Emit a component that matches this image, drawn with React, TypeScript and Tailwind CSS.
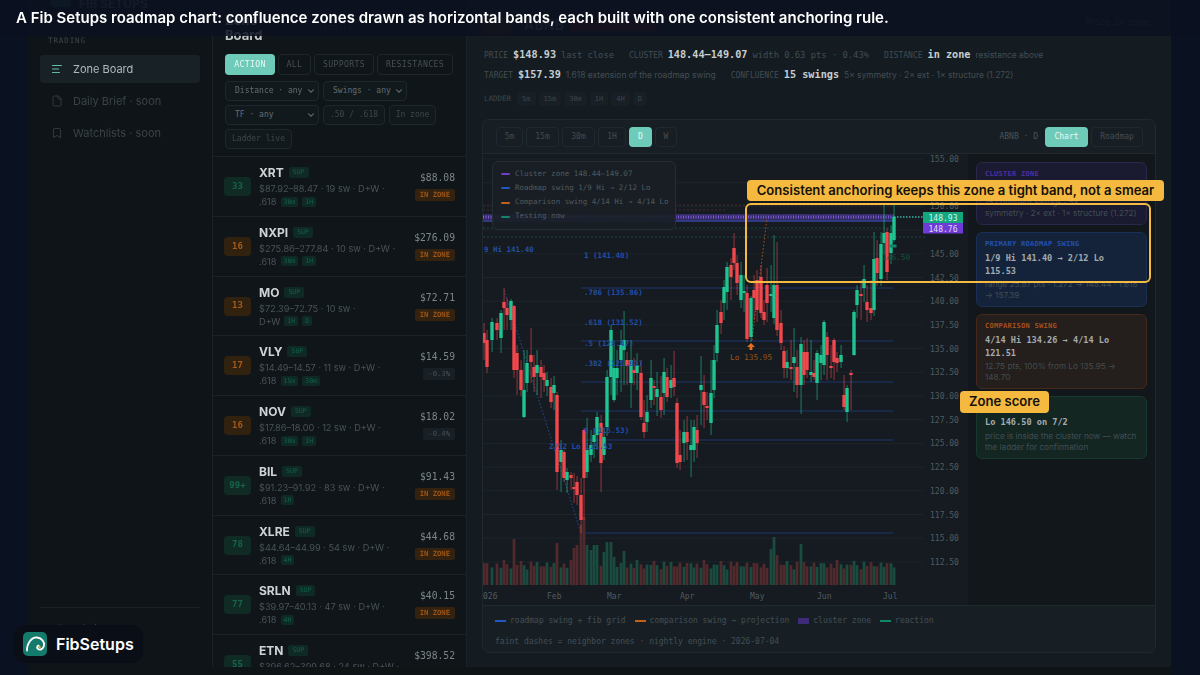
import { AlignLeft, Bookmark, ChevronDown, File } from "lucide-react";

const mono = "font-['DejaVu_Sans_Mono',monospace]";

type Row = {
  rank: string;
  hot: boolean;
  ticker: string;
  range: string;
  rest: string;
  tags: string[];
  price: string;
  chip: string;
};

const rows: Row[] = [
  { rank: "33", hot: false, ticker: "XRT", range: "$87.92–88.47 · 19 sw · D+W ·", rest: ".618", tags: ["30m", "1H"], price: "$88.08", chip: "IN ZONE" },
  { rank: "16", hot: true, ticker: "NXPI", range: "$275.86–277.84 · 10 sw · D+W ·", rest: ".618", tags: ["30m", "1H"], price: "$276.09", chip: "IN ZONE" },
  { rank: "13", hot: true, ticker: "MO", range: "$72.39–72.75 · 10 sw ·", rest: "D+W", tags: ["1H", "D"], price: "$72.71", chip: "IN ZONE" },
  { rank: "17", hot: true, ticker: "VLY", range: "$14.49–14.57 · 11 sw · D+W ·", rest: ".618", tags: ["15m", "30m"], price: "$14.59", chip: "-0.3%" },
  { rank: "16", hot: true, ticker: "NOV", range: "$17.86–18.00 · 12 sw · D+W ·", rest: ".618", tags: ["30m", "1H"], price: "$18.02", chip: "-0.4%" },
  { rank: "99+", hot: false, ticker: "BIL", range: "$91.23–91.92 · 83 sw · D+W ·", rest: ".618", tags: ["1H"], price: "$91.43", chip: "IN ZONE" },
  { rank: "78", hot: false, ticker: "XLRE", range: "$44.64–44.99 · 54 sw · D+W ·", rest: ".618", tags: ["4H"], price: "$44.68", chip: "IN ZONE" },
  { rank: "77", hot: false, ticker: "SRLN", range: "$39.97–40.13 · 47 sw · D+W ·", rest: ".618", tags: ["4H"], price: "$40.15", chip: "IN ZONE" },
  { rank: "55", hot: false, ticker: "ETN", range: "$396.62–399.68 · 24 sw · D+W ·", rest: ".618", tags: ["4H"], price: "$398.52", chip: "IN ZONE" },
];

// x, body top, body bottom, wick top, wick bottom, 1 = green (page pixels)
const candles: number[][] = [
  [484, 333, 343, 323, 360, 0], [487, 340, 367, 330, 373, 0], [492, 322, 340, 318, 352, 1], [497, 323, 330, 318, 340, 0],
  [501, 313, 338, 310, 353, 1], [504, 302, 308, 288, 330, 0], [507, 308, 315, 298, 330, 0], [511, 301, 320, 299, 330, 1],
  [514, 306, 370, 305, 378, 0], [517, 353, 370, 345, 395, 0], [521, 370, 390, 360, 396, 0], [524, 390, 417, 350, 418, 1],
  [527, 363, 383, 350, 392, 1], [531, 355, 362, 328, 383, 0], [534, 367, 377, 355, 392, 0], [537, 365, 373, 350, 395, 1],
  [541, 367, 377, 360, 398, 0], [544, 373, 380, 365, 392, 0], [547, 380, 386, 372, 396, 1], [551, 387, 402, 378, 408, 0],
  [554, 385, 393, 376, 410, 1], [557, 395, 472, 392, 490, 0], [561, 450, 462, 440, 492, 1], [564, 452, 478, 450, 482, 0],
  [567, 472, 480, 468, 493, 1], [571, 475, 478, 472, 490, 0], [574, 487, 489, 473, 503, 0], [577, 482, 495, 476, 505, 0],
  [581, 495, 520, 478, 533, 0], [584, 430, 478, 428, 520, 0], [587, 450, 472, 418, 478, 1], [591, 445, 455, 430, 462, 1],
  [594, 435, 442, 428, 458, 1], [597, 417, 435, 412, 450, 1], [601, 423, 463, 415, 492, 0], [604, 437, 455, 428, 460, 1],
  [607, 377, 427, 370, 436, 1], [611, 330, 377, 325, 395, 1], [614, 368, 400, 345, 402, 1], [617, 368, 378, 350, 395, 1],
  [621, 345, 360, 330, 392, 1], [624, 340, 350, 311, 385, 1], [627, 360, 366, 352, 385, 0], [631, 360, 383, 340, 408, 1],
  [634, 370, 373, 358, 385, 0], [637, 365, 373, 353, 390, 1], [641, 373, 417, 360, 420, 0], [644, 423, 432, 400, 438, 0],
  [647, 412, 422, 395, 432, 1], [651, 378, 400, 360, 408, 1], [654, 386, 388, 380, 405, 0], [657, 389, 397, 372, 416, 1],
  [661, 397, 410, 376, 418, 0], [664, 372, 393, 358, 415, 1], [667, 377, 397, 368, 402, 0], [671, 380, 388, 365, 398, 1],
  [674, 378, 387, 351, 396, 0], [677, 403, 463, 398, 468, 0], [680, 455, 462, 430, 470, 0], [684, 432, 443, 420, 462, 1],
  [687, 432, 442, 416, 460, 0], [691, 445, 450, 420, 477, 1], [694, 427, 450, 420, 462, 1], [697, 430, 443, 415, 458, 0],
  [701, 385, 390, 356, 425, 1], [704, 392, 405, 375, 428, 0], [707, 406, 408, 392, 420, 0], [711, 393, 423, 360, 435, 1],
  [714, 360, 390, 345, 398, 1], [717, 325, 353, 310, 362, 1], [721, 312, 323, 300, 334, 0], [724, 287, 303, 280, 320, 1],
  [727, 267, 292, 262, 310, 1], [731, 265, 277, 258, 300, 0], [734, 248, 263, 233, 270, 0], [737, 263, 283, 255, 295, 0],
  [741, 275, 300, 262, 308, 1], [744, 291, 293, 275, 312, 1], [747, 293, 339, 285, 342, 0], [751, 298, 337, 296, 342, 1],
  [754, 290, 298, 275, 320, 0], [757, 280, 310, 270, 322, 0], [761, 277, 313, 265, 318, 0], [764, 312, 320, 300, 325, 0],
  [767, 285, 303, 268, 322, 0], [771, 294, 296, 265, 312, 1], [774, 285, 318, 235, 324, 1], [777, 285, 330, 242, 336, 0],
  [781, 323, 343, 310, 350, 0], [784, 351, 368, 346, 378, 0], [787, 362, 368, 350, 378, 1], [791, 367, 369, 340, 380, 0],
  [794, 357, 363, 328, 392, 1], [797, 367, 385, 350, 398, 0], [801, 344, 385, 337, 414, 1], [804, 352, 375, 340, 385, 0],
  [807, 352, 370, 338, 378, 0], [811, 372, 375, 340, 382, 1], [814, 373, 377, 360, 380, 0], [817, 353, 383, 350, 400, 1],
  [821, 355, 363, 345, 380, 1], [824, 322, 365, 320, 375, 1], [827, 337, 355, 332, 380, 0], [831, 366, 368, 345, 378, 0],
  [834, 340, 362, 338, 380, 0], [837, 358, 363, 352, 372, 0], [841, 355, 362, 345, 368, 1], [844, 395, 407, 375, 410, 0],
  [847, 388, 412, 385, 422, 1], [851, 373, 375, 370, 410, 0], [854, 312, 355, 310, 356, 1], [857, 290, 305, 285, 318, 1],
  [861, 294, 296, 280, 320, 0], [864, 279, 288, 265, 302, 1], [867, 302, 310, 285, 322, 0], [871, 308, 313, 280, 320, 0],
  [874, 259, 310, 232, 316, 1], [877, 258, 273, 240, 286, 0], [881, 244, 279, 232, 286, 1], [884, 233, 243, 205, 254, 1],
  [887, 232, 272, 228, 280, 0], [891, 233, 253, 225, 264, 1], [894, 217, 240, 205, 242, 1],
];

// bar tops for the spikes, everything else gets a small repeating height
const spikes: Record<number, number> = { 514: 539, 557: 543, 574: 548, 577: 545, 581: 525, 584: 517, 587: 545, 591: 550, 594: 545, 597: 545, 604: 552, 607: 542, 611: 542, 614: 557, 624: 551, 774: 537, 771: 549, 777: 555, 801: 544 };

function volTop(x: number, i: number) {
  return spikes[x] ?? 563 + ((i * 7) % 5) * 1.6 - ((i * 3) % 4);
}

const priceTicks = [155, 152.5, 150, 147.5, 145, 142.5, 140, 137.5, 135, 132.5, 130, 127.5, 125, 122.5, 120, 117.5, 115, 112.5];
const tickY = (p: number) => 159 + (155 - p) * 9.48;
const axisTicks = priceTicks.filter((p) => p !== 152.5 && p !== 147.5);

const fibLines = [288, 341, 382, 411, 440, 533];
const fibLabels: [number, number, string][] = [
  [584, 258, "1 (141.40)"], [584, 295, ".786 (135.86)"], [584, 325, ".618 (131.52)"], [584, 346, ".5 (128.47)"],
  [584, 366, ".382 (125.81)"], [584, 433, "0 (115.53)"], [549, 449, "2/12 Lo 115.53"], [484, 252, "9 Hi 141.40"],
];
const months: [number, string][] = [[483, "026"], [547, "Feb"], [607, "Mar"], [680, "Apr"], [750, "May"], [817, "Jun"], [883, "Jul"]];

function Chart() {
  return (
    <svg viewBox="483 154 485 451" width={485} height={451} className="block" fontFamily="DejaVu Sans Mono, monospace">
      {priceTicks.map((p) => (
        <line key={p} x1={483} x2={923} y1={tickY(p)} y2={tickY(p)} stroke="#1d252a" strokeWidth={1} />
      ))}
      <rect x={483} y={214} width={411} height={8} fill="#342a66" />
      <line x1={483} x2={894} y1={205} y2={205} stroke="#4a2a2e" strokeDasharray="2 2" />
      <line x1={483} x2={725} y1={210} y2={210} stroke="#4a2a2e" strokeDasharray="2 2" />
      <line x1={483} x2={894} y1={228} y2={228} stroke="#1f4a3e" strokeDasharray="2 2" />
      <line x1={483} x2={925} y1={237} y2={237} stroke="#1f4a3e" strokeDasharray="2 2" />
      <line x1={483} x2={894} y1={217} y2={217} stroke="#7c5cd6" strokeWidth={3} strokeDasharray="1 1.5" />
      <line x1={483} x2={894} y1={221} y2={221} stroke="#2d4aa0" strokeWidth={1} />
      <line x1={894} x2={925} y1={217} y2={217} stroke="#2e8d86" strokeWidth={2} strokeDasharray="1.5 1.5" />
      {fibLines.map((y) => (
        <line key={y} x1={581} x2={893} y1={y} y2={y} stroke="#20376e" strokeWidth={1.2} />
      ))}
      <line x1={504} y1={290} x2={581} y2={533} stroke="#2a4a9a" strokeWidth={1} strokeDasharray="1.5 2" />
      <line x1={752} y1={340} x2={767} y2={218} stroke="#a8561a" strokeWidth={1} strokeDasharray="1.5 2" />
      {candles.map(([x, , , , , up], i) => (
        <rect key={"v" + x} x={x - 1.4} y={volTop(x, i)} width={2.8} height={585 - volTop(x, i)} fill={up ? "#1b4b3f" : "#502a2c"} />
      ))}
      {candles.map(([x, top, bottom, hi, lo, up]) => (
        <g key={x} fill={up ? "#1fc491" : "#f0484d"}>
          <rect x={x - 0.4} y={hi} width={0.9} height={lo - hi} opacity={0.65} />
          <rect x={x - 1.7} y={top} width={3.4} height={bottom - top} />
        </g>
      ))}
      {fibLabels.map(([x, y, label]) => (
        <text key={label} x={x} y={y} fontSize={7.5} fontWeight={700} fill="#234fa8">{label}</text>
      ))}
      <path d="M751 343 l-4 4 h2.6 v3 h2.8 v-3 h2.6 z" fill="#e8701c" />
      <text x={730} y={360} fontSize={7.8} fill="#9a5219">Lo 135.95</text>
      <path d="M889 246 l4 -3.5 v2 h3.5 v3 h-3.5 v2 z" fill="#12866a" />
      <text x={882} y={260} fontSize={7.8} fill="#17513f">146.50</text>
      {axisTicks.map((p) => (
        <text key={p} x={930} y={tickY(p) + 3} fontSize={8} fill="#505b61">{p.toFixed(2)}</text>
      ))}
      <rect x={923} y={212} width={40} height={11} fill="#14a77e" />
      <text x={943} y={220.5} fontSize={8} fill="#d8f3ea" textAnchor="middle">148.93</text>
      <rect x={923} y={223} width={40} height={10.5} fill="#6d3bd6" />
      <text x={943} y={231.5} fontSize={8} fill="#e4dcf8" textAnchor="middle">148.76</text>
      {months.map(([x, m]) => (
        <text key={m} x={x} y={599} fontSize={8} fill="#505b61">{m}</text>
      ))}
    </svg>
  );
}

function NavItem({ icon, label, active }: { icon: React.ReactNode; label: string; active?: boolean }) {
  return (
    <div className={`flex h-[28px] items-center gap-[10px] rounded-[3px] px-[11px] text-[11px] ${active ? "bg-[#182126] text-[#b0babb]" : "text-[#3a4347]"}`}>
      {icon}
      {label}
    </div>
  );
}

function Pill({ children, w }: { children: React.ReactNode; w: string }) {
  return (
    <div className={`${w} ${mono} flex h-[20px] items-center justify-center rounded-[4px] border border-[#1e272c] bg-[#12191d] text-[8px] text-[#3d474c]`}>
      {children}
    </div>
  );
}

function SelectBox({ label, w }: { label: string; w: string }) {
  return (
    <div className={`${w} ${mono} flex h-[20px] items-center justify-between rounded-[4px] border border-[#1e272c] bg-[#12191d] pl-[9px] pr-[2px] text-[8px] text-[#626c70]`}>
      {label}
      <ChevronDown size={10} strokeWidth={2.5} className="text-[#727c80]" />
    </div>
  );
}

function BoardRow({ row }: { row: Row }) {
  const inZone = row.chip === "IN ZONE";
  return (
    <div className="flex h-[59.75px] shrink-0 items-center border-b border-[#1a2227] pl-[11px] pr-[11px] pt-[0.5px]">
      <div className={`${mono} flex h-[19px] w-[27px] shrink-0 items-center justify-center rounded-[4px] text-[9px] font-bold ${row.hot ? "bg-[#30220f] text-[#a5591a]" : "bg-[#0f2b24] text-[#17634c]"}`}>
        {row.rank}
      </div>
      <div className="ml-[8px] min-w-0 flex-1">
        <div className="flex items-center gap-[5px]">
          <span className="text-[12px] font-bold leading-[15px] text-[#cfd3d5]">{row.ticker}</span>
          <span className={`${mono} rounded-[2px] bg-[#0f2a24] px-[4px] py-[1px] text-[6.5px] leading-[9px] text-[#14604a]`}>SUP</span>
        </div>
        <div className="mt-[2px] whitespace-nowrap text-[9.2px] leading-[13px] text-[#495357]">{row.range}</div>
        <div className="flex items-center gap-[3px] text-[9.2px] leading-[13px] text-[#495357]">
          {row.rest}
          {row.tags.map((t) => (
            <span key={t} className={`${mono} ml-[1px] rounded-[2px] bg-[#0f2a24] px-[3px] text-[6.5px] leading-[10px] text-[#14604a]`}>{t}</span>
          ))}
        </div>
      </div>
      <div className={`${mono} flex shrink-0 flex-col items-end gap-[5px]`}>
        <span className="text-[9.7px] leading-[12px] text-[#7c8689]">{row.price}</span>
        <span className={`rounded-[2px] px-[5px] text-[7.2px] leading-[12px] ${inZone ? "bg-[#33220f] font-bold text-[#9c5416]" : "bg-[#182026] text-[#465055]"}`}>{row.chip}</span>
      </div>
    </div>
  );
}

function Stat({ label, value, note, noteSans }: { label: string; value: string; note: string; noteSans?: boolean }) {
  return (
    <div className="flex items-baseline gap-[5px] whitespace-nowrap">
      <span className={`${mono} text-[8px] text-[#424c51]`}>{label}</span>
      <span className={`${mono} text-[10.2px] font-bold text-[#c8cdcf]`}>{value}</span>
      <span className={noteSans ? "text-[8.45px] text-[#434d52]" : `${mono} text-[8.8px] text-[#434d52]`}>{note}</span>
    </div>
  );
}

function SideCard({ title, tone, value, note }: { title: string; tone: string; value: string[]; note: string[] }) {
  return (
    <div className={`${tone} h-[63px] rounded-[6px] border px-[8px] pt-[6px] has-[.tall]:h-[75px]`}>
      <div className={`${mono} text-[7px] font-bold leading-[10px] tracking-[0.04em]`}>{title}</div>
      <div className={`${mono} ${value.length > 1 ? "tall" : ""} mt-[3px] text-[8.6px] font-semibold leading-[12.5px] text-[#a3aaae]`}>
        {value.map((v) => (<div key={v}>{v}</div>))}
      </div>
      <div className="mt-[2px] text-[8.2px] leading-[11.3px] text-[#434d52]">
        {note.map((n) => (<div key={n} className="whitespace-nowrap">{n}</div>))}
      </div>
    </div>
  );
}

function LegendDash({ color, text }: { color: string; text: string }) {
  return (
    <div className="flex items-center gap-[5px]">
      <span className={`${color} h-[2px] w-[9px] rounded-full`} />
      {text}
    </div>
  );
}

export default function App() {
  return (
    <div className="relative h-[675px] w-[1200px] overflow-hidden bg-[#0a1120] font-['Inter',sans-serif]">
      <div className="ml-[28px] flex h-full w-[1143px] bg-[#0f1517] blur-[0.4px]">
        {/* sidebar */}
        <div className="flex h-full w-[184px] shrink-0 flex-col bg-[#0e1418] px-[12px]">
          <div className="flex h-[36px] items-start gap-[8px] pl-[11px]">
            <div className="h-[7px] w-[20px] rounded-b-[4px] bg-[#1a4a45]" />
            <span className="text-[12px] leading-[7px] font-bold text-[#4a5459]">FIB SETUPS</span>
          </div>
          <div className={`${mono} pl-[8px] text-[7.5px] leading-[10px] tracking-[0.12em] text-[#3e484d]`}>TRADING</div>
          <div className="mt-[9px] flex flex-col gap-[4px]">
            <NavItem active label="Zone Board" icon={<AlignLeft size={12} strokeWidth={2} className="text-[#5fbcaa]" />} />
            <NavItem label="Daily Brief · soon" icon={<File size={12} strokeWidth={1.6} />} />
            <NavItem label="Watchlists · soon" icon={<Bookmark size={12} strokeWidth={1.6} />} />
          </div>
          <div className="mt-auto border-t border-[#1a2126] pb-[29px] pl-[10px] pt-[14px]">
            <div className="flex items-center gap-[8px]">
              <div className="flex h-[20px] w-[20px] items-center justify-center rounded-full bg-[#182126] text-[9px] text-[#4c565b]">S</div>
              <div className="text-[9.5px] leading-[12px] text-[#3e484c]">
                <div>shot-qa</div>
                <div>free preview</div>
              </div>
            </div>
          </div>
        </div>

        {/* board */}
        <div className="flex h-[667px] w-[255px] shrink-0 flex-col overflow-hidden border-x border-[#1a2227] bg-[#0f1519]">
          <div className="relative h-[157px] shrink-0 border-b border-[#1a2227] px-[12px]">
            <div className="flex h-[54px] items-end gap-[8px] pb-[11px]">
              <div className="text-[13px] font-bold leading-[15px] text-[#c2c7c9]">Zone<br />Board</div>
              <div className={`${mono} mb-[9px] ml-[48px] text-[8px] text-[#39434a]`}>symbols</div>
            </div>
            <div className={`${mono} flex gap-[3px] text-[8.2px] tracking-[0.04em]`}>
              <div className="flex h-[21px] w-[50px] items-center justify-center rounded-[4px] bg-[#6fcbb9] text-[#e9f8f4]">ACTION</div>
              <div className="flex h-[21px] w-[33px] items-center justify-center rounded-[4px] border border-[#1e272c] text-[#465156]">ALL</div>
              <div className="flex h-[21px] w-[60px] items-center justify-center rounded-[4px] border border-[#1e272c] text-[#465156]">SUPPORTS</div>
              <div className="flex h-[21px] w-[76px] items-center justify-center rounded-[4px] border border-[#1e272c] text-[#465156]">RESISTANCES</div>
            </div>
            <div className="mt-[6px] flex gap-[4px]">
              <SelectBox label="Distance · any" w="w-[94px]" />
              <SelectBox label="Swings · any" w="w-[84px]" />
            </div>
            <div className="mt-[4px] flex gap-[4px]">
              <SelectBox label="TF · any" w="w-[94px]" />
              <Pill w="w-[62px]">.50 / .618</Pill>
              <Pill w="w-[47px]">In zone</Pill>
            </div>
            <div className="mt-[4px]">
              <Pill w="w-[67px]">Ladder live</Pill>
            </div>
          </div>
          {rows.map((r) => (
            <BoardRow key={r.ticker} row={r} />
          ))}
        </div>

        {/* main */}
        <div className="flex h-[667px] w-[704px] shrink-0 flex-col bg-[#141c21] pl-[15px] pr-[15px]">
          <div className="flex h-[45px] shrink-0 items-start">
            <div className="mt-[17px] h-[18px] w-[30px] rounded-[5px] bg-[#3a2412]" />
            <span className="ml-[12px] mt-[18px] text-[14px] font-bold leading-[14px] text-[#586268]">ABNB</span>
            <span className="ml-[6px] mt-[20px] h-[11px] w-[87px] rounded-[3px] bg-[#5a1a1c]" />
            <span className={`${mono} ml-auto mr-[8px] mt-[17px] text-[8px] text-[#4d585e]`}>Price in zone</span>
          </div>
          <div className="flex h-[20px] shrink-0 items-center gap-[15px] pl-[2px]">
            <Stat label="PRICE" value="$148.93" note="last close" />
            <Stat label="CLUSTER" value="148.44–149.07" note="width 0.63 pts · 0.43%" />
            <Stat label="DISTANCE" value="in zone" note="resistance above" noteSans />
          </div>
          <div className="flex h-[20px] shrink-0 items-center gap-[15px] pl-[2px]">
            <Stat label="TARGET" value="$157.39" note="1.618 extension of the roadmap swing" noteSans />
            <Stat label="CONFLUENCE" value="15 swings" note="5× symmetry · 2× ext · 1× structure (1.272)" noteSans />
          </div>
          <div className={`${mono} mt-[6.5px] flex h-[15px] shrink-0 items-center gap-[3px] pl-[2px] text-[7px] text-[#3d474c]`}>
            <span className="mr-[3px] text-[7.5px]">LADDER</span>
            {["5m", "15m", "30m", "1H", "4H", "D"].map((t) => (
              <span key={t} className="flex h-[14px] items-center rounded-[3px] bg-[#181f25] px-[5px]">{t}</span>
            ))}
          </div>

          <div className="mt-[12.5px] flex h-[534px] shrink-0 flex-col overflow-hidden rounded-[7px] border border-[#20292e] bg-[#171f25]">
            <div className="flex h-[34px] shrink-0 items-center border-b border-[#20292e] pl-[13px] pr-[12px]">
              <div className={`${mono} flex gap-[3px] text-[8px] text-[#424c51]`}>
                {[["5m", "w-[27px]"], ["15m", "w-[33px]"], ["30m", "w-[33px]"], ["1H", "w-[28px]"]].map(([t, w]) => (
                  <span key={t} className={`${w} flex h-[20px] items-center justify-center rounded-[4px] border border-[#20292e]`}>{t}</span>
                ))}
                <span className="flex h-[20px] w-[23px] items-center justify-center rounded-[4px] bg-[#6fcbb9] text-[#e9f8f4]">D</span>
                <span className="flex h-[20px] w-[22px] items-center justify-center rounded-[4px] border border-[#20292e]">W</span>
              </div>
              <div className={`${mono} ml-auto flex items-center gap-[3px] text-[8px] text-[#424c51]`}>
                <span className="mr-[4px] text-[#4a5459]">ABNB · D</span>
                <span className="flex h-[20px] w-[43px] items-center justify-center rounded-[4px] bg-[#6fcbb9] text-[#e9f8f4]">Chart</span>
                <span className="flex h-[20px] w-[52px] items-center justify-center rounded-[4px] border border-[#20292e]">Roadmap</span>
              </div>
            </div>
            <div className="flex h-[451px] shrink-0">
              <div className="relative w-[485px] shrink-0 bg-[#151b20]">
                <Chart />
                <div className={`${mono} absolute left-[9px] top-[7px] flex h-[69px] w-[184px] flex-col justify-center gap-[3.6px] rounded-[6px] border border-[#252e33] bg-[#181f25]/90 pl-[8px] text-[7.5px] leading-[10.5px] text-[#4f5a60]`}>
                  <LegendDash color="bg-[#6d3fc4]" text="Cluster zone 148.44–149.07" />
                  <LegendDash color="bg-[#2456c0]" text="Roadmap swing 1/9 Hi → 2/12 Lo" />
                  <LegendDash color="bg-[#c2601c]" text="Comparison swing 4/14 Hi → 4/14 Lo" />
                  <LegendDash color="bg-[#12866a]" text="Testing now" />
                </div>
              </div>
              <div className="flex w-[187px] shrink-0 flex-col gap-[7px] bg-[#11171b] p-[8px]">
                <SideCard title="CLUSTER ZONE" tone="border-[#2a2748] bg-[#1a1a30] text-[#4c2fa0]" value={["148.44–149.07"]} note={["15 confluent swings · 5×", "symmetry · 2× ext · 1× structure (1.272)"]} />
                <SideCard title="PRIMARY ROADMAP SWING" tone="border-[#1a2f55] bg-[#14233a] text-[#2450b0]" value={["1/9 Hi 141.40 → 2/12 Lo", "115.53"]} note={["range 25.87 pts · 1.272 → 148.44 · 1.618", "→ 157.39"]} />
                <SideCard title="COMPARISON SWING" tone="border-[#46291a] bg-[#241e1c] text-[#a4501c]" value={["4/14 Hi 134.26 → 4/14 Lo", "121.51"]} note={["12.75 pts, 100% from Lo 135.95 →", "148.70"]} />
                <SideCard title="REACTION" tone="border-[#17392f] bg-[#132622] text-[#17634c]" value={["Lo 146.50 on 7/2"]} note={["price is inside the cluster now — watch", "the ladder for confirmation"]} />
              </div>
            </div>
            <div className={`${mono} flex-1 border-t border-[#20292e] pl-[12px] pt-[9px] text-[8px] text-[#434e53]`}>
              <div className="flex h-[12px] items-center gap-[9px]">
                <div className="flex items-center gap-[4px]"><span className="h-[2px] w-[11px] bg-[#2456c0]" />roadmap swing + fib grid</div>
                <div className="flex items-center gap-[4px]"><span className="h-[2px] w-[11px] bg-[#c2601c]" />comparison swing → projection</div>
                <div className="flex items-center gap-[4px]"><span className="h-[6px] w-[11px] bg-[#3d2a78]" />cluster zone</div>
                <div className="flex items-center gap-[4px]"><span className="h-[2px] w-[11px] bg-[#12866a]" />reaction</div>
              </div>
              <div className="mt-[9px]">faint dashes = neighbor zones · nightly engine · 2026-07-04</div>
            </div>
          </div>
        </div>
      </div>

      {/* overlays */}
      <div className="absolute left-0 top-0 flex h-[36px] w-full items-center bg-[#0a1120]/85 pl-[16px] text-[15px] font-semibold text-white">
        A Fib Setups roadmap chart: confluence zones drawn as horizontal bands, each built with one consistent anchoring rule.
      </div>
      <div className="absolute left-[747px] top-[180px] flex h-[21px] w-[417px] items-center justify-center rounded-[4px] bg-[#f5b93f] text-[13.1px] font-semibold text-[#14110a]">
        Consistent anchoring keeps this zone a tight band, not a smear
      </div>
      <div className="absolute left-[745px] top-[203px] h-[80px] w-[406px] rounded-[6px] border-2 border-[#f4bb42]" />
      <div className="absolute left-[960px] top-[391px] flex h-[22px] w-[89px] items-center justify-center rounded-[4px] bg-[#f5b93f] text-[13.1px] font-semibold text-[#14110a]">
        Zone score
      </div>
      <div className="absolute left-[14px] top-[625px] flex h-[38px] w-[129px] items-center gap-[9px] rounded-[10px] bg-[#0a0f17] pl-[9px]">
        <svg width={24} height={24} viewBox="0 0 24 24">
          <rect width={24} height={24} rx={5} fill="#147a6c" />
          <path d="M4 18.5C4 10.5 9 5 14 5.5C19 6 21.5 10 21 13.5C20.5 17 17 18.5 15 17C13.5 16 14 14 15.5 13.5" fill="none" stroke="#fff" strokeWidth={1.8} strokeLinecap="round" />
          <circle cx={16.5} cy={15} r={1.2} fill="#f5b93f" />
        </svg>
        <span className="text-[16px] font-semibold text-white">FibSetups</span>
      </div>
    </div>
  );
}
